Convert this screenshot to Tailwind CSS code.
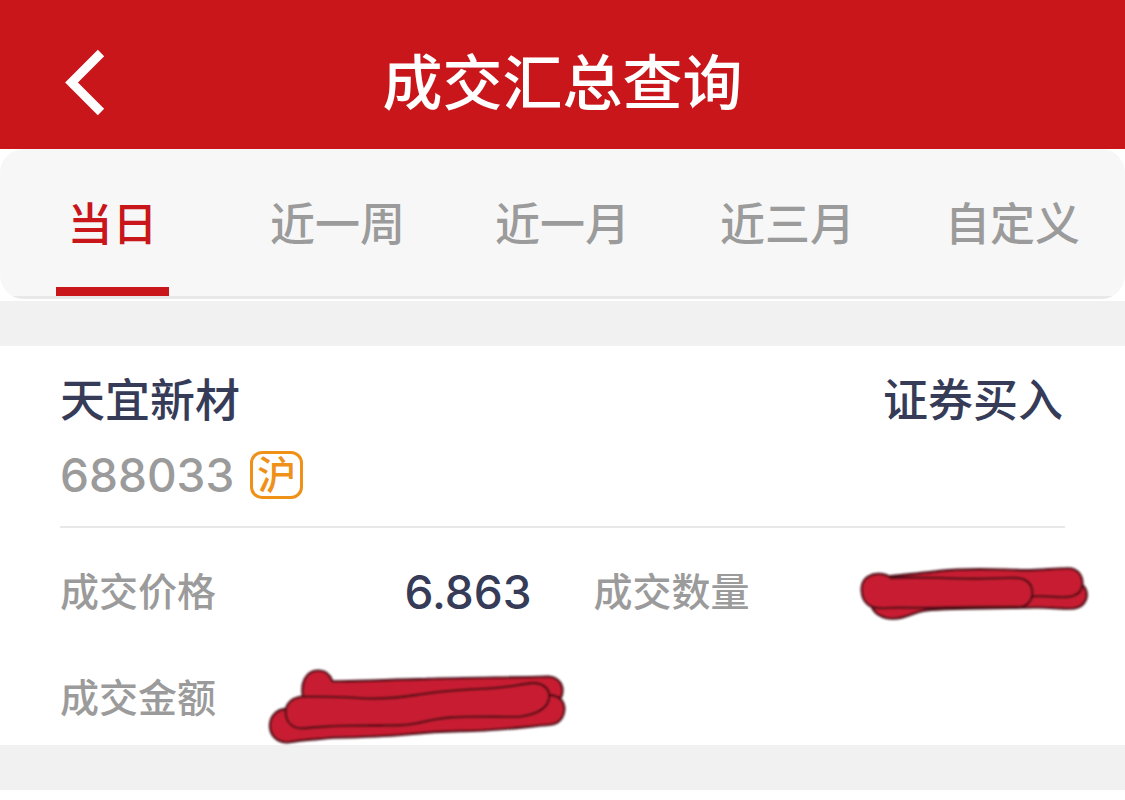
<!DOCTYPE html>
<html lang="zh-CN">
<head>
<meta charset="utf-8">
<meta name="viewport" content="width=device-width, initial-scale=1">
<title>成交汇总查询</title>
<script src="https://cdn.jsdelivr.net/npm/@tailwindcss/browser@4"></script>
</head>
<body class="min-h-screen bg-white font-['Inter','Noto_Sans_CJK_SC',sans-serif] font-medium text-[#9b9b9b]">
<header class="grid h-[149px] grid-cols-[1fr_auto_1fr] items-center bg-[#c8161b] px-[60px] pt-[17px] text-white">
  <button type="button" aria-label="返回" class="w-12">
    <svg class="block h-[68px] w-12" viewBox="0 0 48 68" fill="none" stroke="currentColor" stroke-width="9"><path d="M41 4 11.500 33.500 41 63"/></svg>
  </button>
  <h1 class="text-[60px] leading-[80px]">成交汇总查询</h1>
</header>

<div class="mb-[2px] overflow-hidden rounded-[24px] bg-[#f7f7f7]">
  <nav aria-label="查询区间" class="grid h-[150px] grid-cols-5 border-b-[3px] border-[#e8e8e8] text-[45px] leading-[60px]">
    <button type="button" aria-current="true" class="flex flex-col items-center justify-between pt-[46px] text-[#c8161b]">当日<span class="h-[9px] w-1/2 bg-[#c8161b]"></span></button>
    <button type="button" class="flex justify-center pt-[46px]">近一周</button>
    <button type="button" class="flex justify-center pt-[46px]">近一月</button>
    <button type="button" class="flex justify-center pt-[46px]">近三月</button>
    <button type="button" class="flex justify-center pt-[46px]">自定义</button>
  </nav>
</div>

<main class="border-y-[45px] border-[#f1f1f1] bg-white">
  <article class="px-[60px] pt-[25px] pb-[17px]">
    <div class="border-b-2 border-[#e8e8e8] pb-[21px] text-[45px] leading-[60px]">
      <div class="flex justify-between pr-[2px] text-[#363b57]">
        <h2>天宜新材</h2>
        <span>证券买入</span>
      </div>
      <div class="mt-[14px] flex items-center gap-4">
        <span class="text-[46px]">688033</span>
        <span class="flex h-12 w-[53px] items-center justify-center rounded-[12px] border-[3px] border-[#ef9018] text-[39px] leading-[42px] text-[#ef9018]">沪</span>
      </div>
    </div>
    <dl class="grid grid-cols-2 gap-x-[62px] gap-y-[46px] pt-[34px] text-[39px] leading-[60px]">
      <div class="flex justify-between">
        <dt>成交价格</dt>
        <dd class="text-[46px] text-[#363b57]">6.863</dd>
      </div>
      <div class="relative">
        <dt>成交数量</dt>
        <dd>
          <svg role="img" aria-label="已遮盖" class="absolute -top-3 -right-[60px] h-[90px] w-[285px]" viewBox="0 0 855 270" fill="#c81f31" stroke-linejoin="round">
            <defs><filter id="soft" x="-10%" y="-20%" width="120%" height="140%"><feGaussianBlur stdDeviation="3"/></filter></defs>
            <g filter="url(#soft)" stroke="#4b0d18" stroke-width="7">
              <path d="M95 170C105 192 130 207 160 206C205 204 220 184 260 181C310 175 500 174 560 173C610 169 650 176 690 176C727 176 742 153 740 130C736 105 723 98 700 105L580 138Z"/>
              <path d="M120 82C200 74 245 70 300 63C380 54 450 58 530 60C580 64 640 55 685 55C712 55 727 76 727 99C727 124 710 139 680 141C640 143 620 136 578 139L140 150Z"/>
              <path d="M152 84C138 70 105 66 83 81C57 97 60 147 87 166C111 181 145 171 190 173C260 175 330 171 410 171H535C561 171 577 151 577 128C577 102 559 85 530 84C470 82 440 88 380 86C330 84 230 81 152 84Z"/>
            </g>
          </svg>
        </dd>
      </div>
      <div class="relative">
        <dt>成交金额</dt>
        <dd>
          <svg role="img" aria-label="已遮盖" class="absolute -top-[13px] -right-[58px] h-[100px] w-[340px]" viewBox="0 0 1020 300" fill="#c81f31" stroke-linejoin="round">
            <g filter="url(#soft)" stroke="#4b0d18" stroke-width="7">
              <path d="M160 130C150 85 167 47 205 47C226 47 240 58 247 79C330 81 430 73 530 72C650 68 780 68 895 65C924 67 939 87 937 110C936 130 920 150 890 155L170 170Z"/>
              <path d="M105 162C75 166 59 188 60 214C61 242 82 263 113 262C160 254 200 253 250 248C340 246 390 245 460 239C530 232 570 229 630 228C710 229 790 219 900 209C927 208 942 187 943 162C943 140 929 122 900 120L160 180Z"/>
              <path d="M160 125C123 127 106 149 107 174C109 201 126 219 155 220C205 217 235 211 310 212C370 210 440 214 480 208C530 200 560 187 630 186C700 183 760 187 810 185C870 177 898 157 898 121C896 99 876 83 849 84C810 87 780 98 710 101C600 104 560 111 500 120C440 129 370 134 310 128C260 126 210 124 160 125Z"/>
            </g>
          </svg>
        </dd>
      </div>
    </dl>
  </article>
</main>
</body>
</html>
